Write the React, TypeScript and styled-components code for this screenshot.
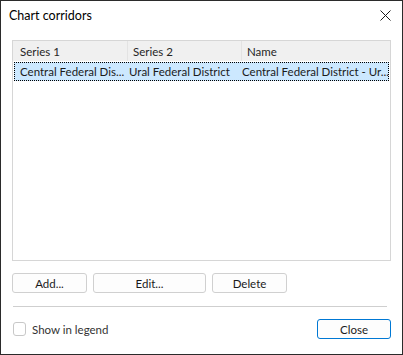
import React from 'react'
import styled, { createGlobalStyle } from 'styled-components'

const GlobalStyle = createGlobalStyle`
  html, body {
    margin: 0;
    padding: 0;
    background: #ffffff;
  }
  body {
    font-family: 'Segoe UI', Lato, 'Noto Sans', sans-serif;
    font-size: 11.5px;
    color: #1a1a1a;
  }
`

const Window = styled.div`
  box-sizing: border-box;
  width: 403px;
  height: 355px;
  border: 1px solid #2b2b2b;
  background: #ffffff;
  display: flex;
  flex-direction: column;
`

const TitleBar = styled.div`
  height: 30px;
  display: flex;
  align-items: center;
  justify-content: space-between;
  padding: 0 9px 0 8px;
`

const Title = styled.div`
  font-size: 12.5px;
  color: #000000;
  margin-top: -2px;
`

const CloseIcon = styled.svg`
  width: 11px;
  height: 11px;
  margin-right: 2px;
  margin-top: -2px;
`

const Body = styled.div`
  flex: 1;
  display: flex;
  flex-direction: column;
  padding: 9px 11px 0 11px;
`

const ListBox = styled.div`
  box-sizing: border-box;
  height: 221px;
  border: 1px solid #d6d6d6;
  display: flex;
  flex-direction: column;
`

const HeaderRow = styled.div`
  display: grid;
  grid-template-columns: 115px 114px 1fr;
  height: 20px;
  background: #f0f0f0;
`

const HeaderCell = styled.div<{ $last?: boolean; $pad?: number }>`
  display: flex;
  align-items: center;
  padding-left: ${({ $pad }) => $pad ?? 5}px;
  border-right: ${({ $last }) => ($last ? 'none' : '1px solid #e3e3e3')};
  color: #262626;
  white-space: nowrap;
`

const DataRow = styled.div<{ $selected?: boolean }>`
  display: grid;
  grid-template-columns: 114px 113px 1fr;
  height: 19px;
  margin: 1px 1px 0 1px;
  box-sizing: border-box;
  background: ${({ $selected }) => ($selected ? '#cce8ff' : 'transparent')};
  border: ${({ $selected }) => ($selected ? '1px dotted #000000' : '1px solid transparent')};
`

const Cell = styled.div<{ $pad?: number }>`
  display: flex;
  align-items: center;
  padding-left: ${({ $pad }) => $pad ?? 0}px;
  white-space: nowrap;
  overflow: hidden;
  color: #1a1a1a;
`

const ButtonRow = styled.div`
  display: flex;
  gap: 6px;
  margin-top: 12px;
`

const Button = styled.button<{ $w: number; $primary?: boolean }>`
  box-sizing: border-box;
  width: ${({ $w }) => $w}px;
  height: 20px;
  padding: 0;
  border: 1px solid ${({ $primary }) => ($primary ? '#0078d4' : '#d0d0d0')};
  border-radius: 3px;
  background: #fdfdfd;
  font-family: 'Segoe UI', Lato, 'Noto Sans', sans-serif;
  font-size: 11.5px;
  color: #1a1a1a;
`

const Separator = styled.div`
  height: 1px;
  background: #cfcfcf;
  margin: 13px 4px 0 1px;
`

const Footer = styled.div`
  display: flex;
  align-items: center;
  justify-content: space-between;
  margin-top: 12px;
`

const CheckLabel = styled.label`
  display: flex;
  align-items: center;
  gap: 6px;
  color: #333333;
`

const CheckBox = styled.span`
  box-sizing: border-box;
  width: 13px;
  height: 14px;
  border: 1px solid #c8c8c8;
  border-radius: 3px;
  margin-left: 1px;
`

export default function App() {
  return (
    <>
      <GlobalStyle />
      <Window>
        <TitleBar>
          <Title>Chart corridors</Title>
          <CloseIcon viewBox="0 0 11 11">
            <path d="M0.5 0.5 L10.5 10.5 M10.5 0.5 L0.5 10.5" stroke="#1a1a1a" strokeWidth="1" fill="none" />
          </CloseIcon>
        </TitleBar>
        <Body>
          <ListBox>
            <HeaderRow>
              <HeaderCell $pad={7}>Series 1</HeaderCell>
              <HeaderCell>Series 2</HeaderCell>
              <HeaderCell $last>Name</HeaderCell>
            </HeaderRow>
            <DataRow $selected>
              <Cell $pad={5}>Central Federal Dis...</Cell>
              <Cell>Ural Federal District</Cell>
              <Cell>Central Federal District - Ur...</Cell>
            </DataRow>
          </ListBox>
          <ButtonRow>
            <Button $w={75}>Add...</Button>
            <Button $w={113}>Edit...</Button>
            <Button $w={75}>Delete</Button>
          </ButtonRow>
          <Separator />
          <Footer>
            <CheckLabel>
              <CheckBox />
              Show in legend
            </CheckLabel>
            <Button $w={74} $primary>
              Close
            </Button>
          </Footer>
        </Body>
      </Window>
    </>
  )
}
